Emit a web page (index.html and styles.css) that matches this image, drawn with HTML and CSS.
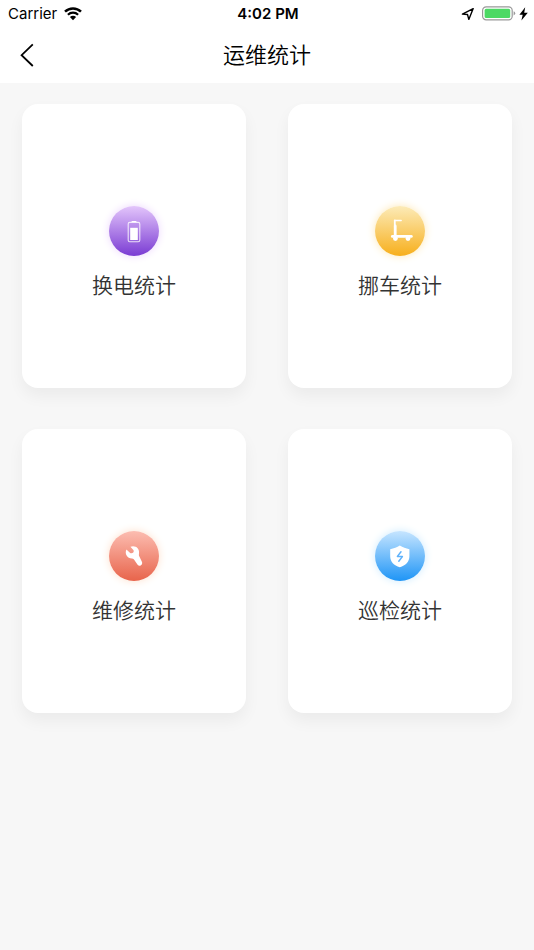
FILE: index.html
```html
<!DOCTYPE html>
<html lang="zh-CN">
<head>
    <meta charset="UTF-8">
    <meta name="viewport" content="width=device-width, initial-scale=1.0">
    <title>运维统计</title>
    <link rel="stylesheet" href="styles.css">
</head>
<body>
    <header class="header">
        <div class="status">
            <div class="status-left">
                <span>Carrier</span>
                <svg class="wifi" width="18" height="14" viewBox="0 0 18 14">
                    <path d="M1 4.6 A11.6 11.6 0 0 1 17 4.6" fill="none" stroke="#000" stroke-width="2.5"/>
                    <path d="M3.9 7.7 A7.4 7.4 0 0 1 14.1 7.7" fill="none" stroke="#000" stroke-width="2.2"/>
                    <path d="M9 13.2 L5.9 10.1 A4.4 4.4 0 0 1 12.1 10.1 Z"/>
                </svg>
            </div>
            <span class="time">4:02 PM</span>
            <div class="status-right">
                <svg width="14" height="14" viewBox="0 0 14 14">
                    <path d="M12.2 1.6 L1.4 7.1 L6.5 7.5 L7.8 12.4 Z" fill="none" stroke="#000" stroke-width="1.4" stroke-linejoin="round"/>
                </svg>
                <svg width="34" height="16" viewBox="0 0 34 16">
                    <rect x="0.6" y="0.8" width="29.6" height="13" rx="3.6" fill="none" stroke="#999" stroke-width="1.2"/>
                    <rect x="2.6" y="2.8" width="25.6" height="9.2" rx="1.6" fill="#4cd964"/>
                    <path d="M31.6 5.2 Q33.2 5.8 33.2 7.3 Q33.2 8.8 31.6 9.4 Z" fill="#999"/>
                </svg>
                <svg width="9" height="14" viewBox="0 0 9 14">
                    <path d="M6.2 0.2 L0.4 7.7 H3.7 L2.4 13.6 L8.8 5.7 H5.2 Z"/>
                </svg>
            </div>
        </div>
        <div class="nav">
            <button class="back" type="button" aria-label="返回">
                <svg width="14" height="24" viewBox="0 0 14 24">
                    <path d="M12.8 1.4 L1.6 12.2 L12.8 23" fill="none" stroke="#000" stroke-width="1.8"/>
                </svg>
            </button>
            <h1 class="title">运维统计</h1>
        </div>
    </header>
    <main class="cards">
        <a class="card" href="#">
            <span class="icon purple">
                <svg width="50" height="50" viewBox="0 0 50 50">
                    <path d="M22.4 15.9 q0 -1 1 -1 h3.2 q1 0 1 1 z" fill="#fff"/>
                    <rect x="19.2" y="16.4" width="11.6" height="19.4" rx="1.6" fill="none" stroke="#fff" stroke-opacity="0.8" stroke-width="1.1"/>
                    <rect x="21.2" y="21.8" width="7.6" height="12.2" fill="#fff"/>
                </svg>
            </span>
            <span class="label">换电统计</span>
        </a>
        <a class="card" href="#">
            <span class="icon yellow">
                <svg width="50" height="50" viewBox="0 0 50 50">
                    <g fill="none" stroke="#fff" stroke-linecap="round">
                        <path d="M19.6 14.5 H26.2" stroke-width="1.4"/>
                        <path d="M19.8 14.5 V20" stroke-width="1.8"/>
                        <path d="M20.2 20 V29" stroke-width="2.8"/>
                        <path d="M17.4 30.4 H36.3" stroke-width="2.9"/>
                    </g>
                    <circle cx="20.4" cy="32.6" r="2.4" fill="#fff"/>
                    <circle cx="33" cy="32.6" r="2.4" fill="#fff"/>
                </svg>
            </span>
            <span class="label">挪车统计</span>
        </a>
        <a class="card" href="#">
            <span class="icon red">
                <svg width="50" height="50" viewBox="0 0 50 50">
                    <path d="M21.4 15.8 C26 14 30.8 17 30 22.4 C29.8 24 29.8 24.6 30.4 25.4 L33 31 C34 33.8 30.6 36.2 28.6 33.8 L24.8 28.2 C24.2 27.6 23.8 27.4 23 27.4 C18.2 27.2 15.4 22.8 17.4 18.4 L21.2 22 C23 23 25.4 21.2 24.6 19.2 Z" fill="#fff"/>
                </svg>
            </span>
            <span class="label">维修统计</span>
        </a>
        <a class="card" href="#">
            <span class="icon blue">
                <svg width="50" height="50" viewBox="0 0 50 50">
                    <path d="M24.8 14.6 C27.8 16.6 31 17.6 34.4 18.2 V25.2 C34.4 30.8 30.6 34.4 24.8 36.2 C19 34.4 15.2 30.8 15.2 25.2 V18.2 C18.8 17.6 22 16.6 24.8 14.6 Z" fill="#fff"/>
                    <path d="M26 20.8 L22.4 25.4 L27.4 25.6 L23.8 30.2" fill="none" stroke="#5fb2fb" stroke-width="1.5" stroke-linejoin="round" stroke-linecap="round"/>
                </svg>
            </span>
            <span class="label">巡检统计</span>
        </a>
    </main>
</body>
</html>
```

FILE: styles.css
```css
*{
    padding: 0;
    margin: 0;
    box-sizing: border-box;
}
body{
    min-height: 100vh;
    background: #f7f7f7;
    font-family: Inter, "Noto Sans CJK SC", sans-serif;
    color: #000;
}
.header{
    background: #fff;
}
.status{
    display: grid;
    grid-template-columns: 1fr auto 1fr;
    align-items: center;
    height: 27px;
    padding: 0 6px 0 8px;
    font-size: 15px;
    line-height: 27px;
}
.status-left,
.status-right{
    display: flex;
    align-items: center;
    gap: 7px;
}
.status-right{
    justify-content: flex-end;
    gap: 3px;
}
.status-right svg:first-child{
    margin-right: 4px;
}
.time{
    font-weight: 600;
}
.nav{
    display: grid;
    grid-template-columns: 1fr auto 1fr;
    align-items: center;
    height: 56px;
}
.back{
    width: 54px;
    height: 44px;
    border: 0;
    background: none;
    cursor: pointer;
}
.back svg{
    display: block;
    margin: 0 auto;
}
.title{
    font-size: 22px;
    font-weight: 350;
    line-height: 32px;
}
.cards{
    display: grid;
    grid-template-columns: 1fr 1fr;
    gap: 41px 42px;
    padding: 21px 22px;
}
.card{
    display: flex;
    flex-direction: column;
    align-items: center;
    padding: 102px 0 86px;
    border-radius: 16px;
    background: #fff;
    box-shadow: 0 8px 16px rgba(0, 0, 0, 0.05);
    color: #333;
    text-decoration: none;
}
.icon{
    width: 50px;
    height: 50px;
    border-radius: 50%;
}
.icon svg{
    display: block;
}
.purple{
    background: linear-gradient(#e3c5fb, #7a3bd3);
    box-shadow: 0 0 8px #ecd6fd;
}
.yellow{
    background: linear-gradient(#fcebb8, #f7af1c);
    box-shadow: 0 0 8px #fde8b4;
}
.red{
    background: linear-gradient(#fcbdb1, #e8644b);
    box-shadow: 0 0 8px #fde0cc;
}
.blue{
    background: linear-gradient(#c6e5ff, #1f95f6);
    box-shadow: 0 0 8px #cdebff;
}
.label{
    margin-top: 14px;
    font-size: 21px;
    font-weight: 350;
    line-height: 32px;
}
```
